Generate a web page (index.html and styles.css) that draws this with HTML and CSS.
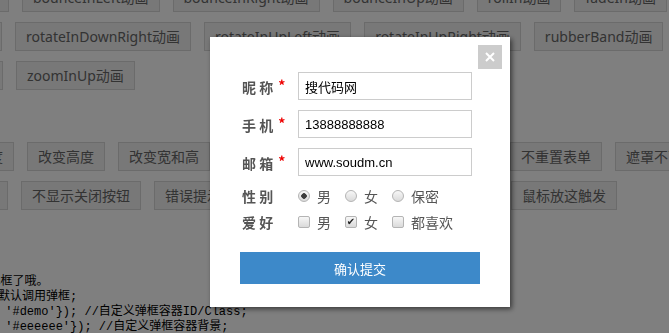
FILE: index.html
```html
<!DOCTYPE html>
<html lang="zh-CN">
<head>
  <meta charset="UTF-8" />
  <title>弹框插件演示</title>
  <meta name="viewport" content="width=device-width, initial-scale=1" />
  <link rel="stylesheet" href="styles.css">
</head>
<body>
  <div class="page">
    <div class="group">
      <div class="row row-1">
        <div class="lead"><span class="btn">bounceInDown动画</span></div>
        <span class="btn">bounceInLeft动画</span>
        <span class="btn">bounceInRight动画</span>
        <span class="btn">bounceInUp动画</span>
        <span class="btn">rollIn动画</span>
        <span class="btn">fadeIn动画</span>
      </div>
      <div class="row row-2">
        <div class="lead"><span class="btn">rotateInDownLeft动画</span></div>
        <span class="btn">rotateInDownRight动画</span>
        <span class="btn">rotateInUpLeft动画</span>
        <span class="btn">rotateInUpRight动画</span>
        <span class="btn">rubberBand动画</span>
      </div>
      <div class="row row-3">
        <div class="lead"><span class="btn">zoomInRight动画</span></div>
        <span class="btn">zoomInUp动画</span>
      </div>
    </div>

    <div class="group group-size">
      <div class="row row-4">
        <div class="lead"><span class="btn">改变宽度</span></div>
        <span class="btn">改变高度</span>
        <span class="btn">改变宽和高</span>
        <span class="btn">自定义标题</span>
        <span class="btn">改变位置</span>
        <span class="btn">设置按钮</span>
        <span class="btn">不重置表单</span>
        <span class="btn">遮罩不可关闭</span>
      </div>
      <div class="row row-5">
        <div class="lead"><span class="btn">显示遮罩</span></div>
        <span class="btn">不显示关闭按钮</span>
        <span class="btn">错误提示弹框</span>
        <span class="btn">确认框回调函数</span>
        <span class="btn">加载中提示</span>
        <span class="btn">鼠标放这触发</span>
      </div>
    </div>

<pre class="code">//页面加载完成后会自动弹框了哦。
$('body').popup();//默认调用弹框;
$('body').popup({id: '#demo'}); //自定义弹框容器ID/Class;
$('body').popup({bg: '#eeeeee'}); //自定义弹框容器背景;</pre>
  </div>

  <div class="mask"></div>

  <div class="dialog">
    <span class="close">
      <svg width="10" height="10" viewBox="0 0 10 10"><path d="M1 1L9 9M9 1L1 9" stroke="#fff" stroke-width="2"/></svg>
    </span>
    <form class="form">
      <div class="field">
        <label class="label" for="nick">昵 称<em>*</em></label>
        <input class="text" id="nick" value="搜代码网" />
      </div>
      <div class="field">
        <label class="label" for="phone">手 机<em>*</em></label>
        <input class="text" id="phone" value="13888888888" />
      </div>
      <div class="field">
        <label class="label" for="mail">邮 箱<em>*</em></label>
        <input class="text" id="mail" value="www.soudm.cn" />
      </div>
      <div class="field choice">
        <span class="label">性 别</span>
        <label class="opt"><input type="radio" name="sex" checked />男</label>
        <label class="opt"><input type="radio" name="sex" />女</label>
        <label class="opt"><input type="radio" name="sex" />保密</label>
      </div>
      <div class="field choice">
        <span class="label">爱 好</span>
        <label class="opt"><input type="checkbox" />男</label>
        <label class="opt"><input type="checkbox" checked />女</label>
        <label class="opt"><input type="checkbox" />都喜欢</label>
      </div>
      <button class="submit" type="button">确认提交</button>
    </form>
  </div>
</body>
</html>
```

FILE: styles.css
```css
body {
  margin: 0;
  background: #fff;
  font-family: "Noto Sans", "Noto Sans CJK SC", sans-serif;
  height: 333px;
  overflow: hidden;
}

.page {
  margin-top: -17px;
}

.group-size {
  margin-top: 52px;
}

.row {
  display: flex;
  gap: 13px;
  margin-bottom: 10px;
  white-space: nowrap;
}

.btn {
  flex-shrink: 0;
  height: 29px;
  box-sizing: border-box;
  padding: 0 10px;
  border: 1px solid #d6d6d6;
  background: #f0f0f0;
  color: #666;
  font-size: 14px;
  line-height: 27px;
}

/* first button of a row is cut by the left edge */
.lead {
  display: flex;
  justify-content: flex-end;
  flex-shrink: 0;
}
.row-1 .lead { width: 9px; }
.row-2 .lead { width: 2px; }
.row-3 .lead { width: 3px; }
.row-4 .lead { width: 14px; }
.row-5 .lead { width: 8px; }

.code {
  margin: 65px 0 0 -146px;
  font-family: "Liberation Mono", "Noto Sans CJK SC", monospace;
  font-size: 12px;
  line-height: 15px;
  color: #000;
}

.mask {
  position: fixed;
  inset: 0;
  background: rgba(0, 0, 0, 0.5);
}

.dialog {
  position: fixed;
  left: 210px;
  top: 37px;
  width: 300px;
  height: 270px;
  background: #fff;
  box-shadow: 2px 2px 5px rgba(0, 0, 0, 0.55);
}

.close {
  position: absolute;
  top: 8px;
  right: 8px;
  width: 24px;
  height: 24px;
  background: #ccc;
  display: flex;
  align-items: center;
  justify-content: center;
  cursor: pointer;
}

.form {
  padding: 35px 0 0 30px;
}

.field {
  display: flex;
  align-items: center;
  height: 28px;
  margin-bottom: 10px;
}

.label {
  width: 58px;
  flex-shrink: 0;
  box-sizing: border-box;
  padding-left: 2px;
  font-family: "Noto Sans CJK SC", sans-serif;
  font-size: 14px;
  font-weight: bold;
  color: #555;
}

.label em {
  font-style: normal;
  color: #e00;
  margin-left: 5px;
  vertical-align: 2px;
}

.text {
  width: 174px;
  height: 28px;
  box-sizing: border-box;
  margin: 0;
  padding: 0 6px;
  border: 1px solid #ccc;
  font-family: "Liberation Sans", "Noto Sans CJK SC", sans-serif;
  font-size: 13px;
  color: #000;
  outline: none;
}

.choice {
  height: 24px;
  margin: -2px 0 4px;
}

.opt {
  display: flex;
  align-items: center;
  margin-right: 14px;
  font-family: "Noto Sans CJK SC", sans-serif;
  font-size: 14px;
  line-height: 20px;
  color: #555;
}

.opt input {
  appearance: none;
  position: relative;
  width: 12px;
  height: 12px;
  margin: 0 7px 0 0;
  border: 1px solid #b4b4b4;
  background: linear-gradient(#f7f7f7, #dadada);
}

.opt input[type="radio"] {
  border-radius: 50%;
}

.opt input[type="radio"]:checked {
  background: radial-gradient(circle, #3c3c3c 0 2.5px, transparent 3px), linear-gradient(#f7f7f7, #dadada);
}

.opt input[type="checkbox"] {
  border-radius: 2px;
}

.opt input[type="checkbox"]:checked::after {
  content: "✔";
  position: absolute;
  left: 0;
  top: 0;
  width: 10px;
  font-family: "DejaVu Sans", sans-serif;
  font-size: 10px;
  line-height: 10px;
  text-align: center;
  color: #222;
}

.submit {
  display: block;
  width: 240px;
  height: 32px;
  margin-top: 18px;
  border: none;
  background: #3d89c9;
  color: #fff;
  font-family: "Noto Sans CJK SC", sans-serif;
  font-size: 13px;
  cursor: pointer;
}
```
